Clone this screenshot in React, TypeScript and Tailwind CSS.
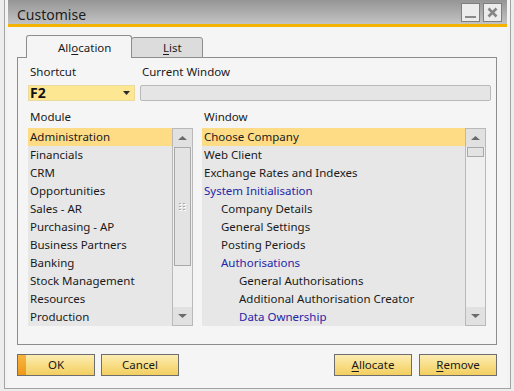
import React from "react";

const FONT = "font-['Noto_Sans',sans-serif]";

function UpArrow() {
  return (
    <svg width="9" height="4" viewBox="0 0 9 4">
      <polygon points="0,4 4.5,0 9,4" fill="#6b6b6b" />
    </svg>
  );
}
function DownArrow() {
  return (
    <svg width="9" height="4" viewBox="0 0 9 4">
      <polygon points="0,0 9,0 4.5,4" fill="#6b6b6b" />
    </svg>
  );
}
function Grip() {
  return (
    <svg width="7" height="8" viewBox="0 0 7 8">
      {[0, 3, 6].map((y) =>
        [0, 4].map((x) => (
          <g key={`${x}-${y}`}>
            <rect x={x + 1} y={y + 1} width="2" height="1" fill="#ffffff" />
            <rect x={x} y={y} width="2" height="1" fill="#a8a8a8" />
          </g>
        ))
      )}
    </svg>
  );
}

function ScrollBar({ thumb, grip }: { thumb: number; grip?: boolean }) {
  return (
    <div className="w-[21px] h-full border border-[#b9b9b9] bg-[#efefef] flex flex-col shrink-0">
      <div className="h-[18px] bg-[#e1e1e1] flex items-center justify-center">
        <UpArrow />
      </div>
      <div className="flex-1 px-px">
        <div
          className={`border border-[#a9a9a9] bg-[#e3e3e3] flex items-center justify-center ${
            thumb > 20 ? "h-[119px]" : "h-[10px]"
          }`}
        >
          {grip ? <Grip /> : null}
        </div>
      </div>
      <div className="h-[18px] bg-[#e1e1e1] flex items-center justify-center">
        <DownArrow />
      </div>
    </div>
  );
}

type Item = { t: string; lvl: number; blue?: boolean };

const modules = [
  "Administration",
  "Financials",
  "CRM",
  "Opportunities",
  "Sales - AR",
  "Purchasing - AP",
  "Business Partners",
  "Banking",
  "Stock Management",
  "Resources",
  "Production",
];

const windows: Item[] = [
  { t: "Choose Company", lvl: 0 },
  { t: "Web Client", lvl: 0 },
  { t: "Exchange Rates and Indexes", lvl: 0 },
  { t: "System Initialisation", lvl: 0, blue: true },
  { t: "Company Details", lvl: 1 },
  { t: "General Settings", lvl: 1 },
  { t: "Posting Periods", lvl: 1 },
  { t: "Authorisations", lvl: 1, blue: true },
  { t: "General Authorisations", lvl: 2 },
  { t: "Additional Authorisation Creator", lvl: 2 },
  { t: "Data Ownership", lvl: 2, blue: true },
];

function Button({ children, ok }: { children: React.ReactNode; ok?: boolean }) {
  return (
    <div className="w-[78px] h-[22px] border border-[#6e6e6e] bg-linear-to-b from-[#fcedb4] via-[#f8de86] to-[#f3cf60] flex items-stretch text-[11.5px] text-[#1a1a1a]">
      <div className={`w-[8px] ${ok ? "bg-linear-to-b from-[#f7b63e] to-[#ee9818]" : ""}`} />
      <div className="flex-1 flex items-center justify-center leading-[18px]">{children}</div>
      <div className="w-[8px]" />
    </div>
  );
}

export default function App() {
  return (
    <div className={`w-[514px] h-[391px] bg-[#ededed] overflow-hidden ${FONT}`}>
      <div className="ml-[4px] w-[507px] h-[389px] border-l border-r border-b border-[#a3a3a3] bg-[#f3f3f3] px-[3px] flex flex-col">
        {/* title bar */}
        <div className="h-[24px] bg-linear-to-b from-[#959595] to-[#c3c3c3] flex items-start justify-between pl-[9px] pr-[5px]">
          <div className="pt-[5px] text-[14px] leading-[19px] text-[#1c1c1c]">Customise</div>
          <div className="flex gap-[3px] pt-[3px]">
            <div className="w-[19px] h-[19px] border border-[#7e7e7e] bg-[#ececec] flex items-end justify-center pb-[3px]">
              <div className="w-[11px] h-[2px] bg-[#8a8a8a]" />
            </div>
            <div className="w-[19px] h-[19px] border border-[#7e7e7e] bg-[#ececec] flex items-center justify-center">
              <svg width="11" height="11" viewBox="0 0 11 11">
                <path d="M1.5 1.5 L9.5 9.5 M9.5 1.5 L1.5 9.5" stroke="#858585" strokeWidth="2.6" />
              </svg>
            </div>
          </div>
        </div>
        <div className="h-[3px] bg-[#f4b300]" />

        {/* content */}
        <div className="flex-1 bg-[#f5f5f5] pl-[9px] pr-[10px] flex flex-col">
          {/* tabs */}
          <div className="h-[31px] flex items-end pl-[9px] -mb-px relative z-10">
            <div className="w-[106px] h-[23px] border border-b-0 border-[#8d8d8d] rounded-t-[3px] bg-[#f5f5f5] pl-[31px] pt-[3px] text-[11.5px] leading-[18px] text-[#1a1a1a]">
              All<span className="underline underline-offset-2">o</span>cation
            </div>
            <div className="-ml-px w-[72px] h-[21px] border border-[#8d8d8d] rounded-t-[3px] bg-[#dcdcdc] pl-[31px] pt-px text-[11.5px] leading-[18px] text-[#1a1a1a]">
              <span className="underline underline-offset-2">L</span>ist
            </div>
          </div>

          {/* panel */}
          <div className="w-[480px] h-[288px] border border-[#8d8d8d] pl-[10px] pr-[5px] pt-[5px] flex flex-col">
            <div className="flex gap-[5px] text-[11.5px] leading-[18px] text-[#1a1a1a]">
              <div className="w-[107px] pl-[2px]">Shortcut</div>
              <div className="flex-1 pl-[2px]">Current Window</div>
            </div>
            <div className="mt-[4px] flex gap-[5px]">
              <div className="w-[107px] h-[16px] bg-[#fde792] border border-[#eadb9c] flex items-center justify-between pl-[1px] pr-[4px]">
                <span className="text-[14px] font-bold leading-[14px] text-[#111]">F2</span>
                <svg width="7" height="4" viewBox="0 0 7 4">
                  <polygon points="0,0 7,0 3.5,4" fill="#2a2a2a" />
                </svg>
              </div>
              <div className="flex-1 h-[16px] bg-[#e5e5e5] border border-[#b9b9b9] rounded-[2px]" />
            </div>
            <div className="mt-[7px] flex gap-[9px] text-[11.5px] leading-[18px] text-[#1a1a1a]">
              <div className="w-[165px] pl-[2px]">Module</div>
              <div className="flex-1 pl-[2px]">Window</div>
            </div>
            <div className="mt-[2px] h-[198px] flex gap-[9px] text-[11.5px] leading-[18px]">
              <div className="w-[165px] h-full bg-[#e7e7e7] flex">
                <div className="flex-1 flex flex-col">
                  {modules.map((m, i) => (
                    <div
                      key={m}
                      className={`h-[18px] pl-[2px] whitespace-nowrap text-[#1a1a1a] ${
                        i === 0 ? "bg-[#fedc86]" : ""
                      }`}
                    >
                      {m}
                    </div>
                  ))}
                </div>
                <ScrollBar thumb={119} grip />
              </div>
              <div className="w-[284px] h-full bg-[#e7e7e7] flex">
                <div className="flex-1 flex flex-col">
                  {windows.map((w, i) => (
                    <div
                      key={w.t}
                      className={`h-[18px] whitespace-nowrap ${w.blue ? "text-[#2525a8]" : "text-[#1a1a1a]"} ${
                        w.lvl === 0 ? "pl-[2px]" : w.lvl === 1 ? "pl-[19px]" : "pl-[37px]"
                      } ${i === 0 ? "bg-[#fedc86]" : ""}`}
                    >
                      {w.t}
                    </div>
                  ))}
                </div>
                <ScrollBar thumb={10} />
              </div>
            </div>
          </div>

          {/* buttons */}
          <div className="w-[480px] mt-[9px] flex justify-between">
            <div className="flex gap-[6px]">
              <Button ok>OK</Button>
              <Button>Cancel</Button>
            </div>
            <div className="flex gap-[7px]">
              <Button>
                <span>
                  <span className="underline underline-offset-2">A</span>llocate
                </span>
              </Button>
              <Button>
                <span>
                  <span className="underline underline-offset-2">R</span>emove
                </span>
              </Button>
            </div>
          </div>
        </div>
      </div>
    </div>
  );
}
